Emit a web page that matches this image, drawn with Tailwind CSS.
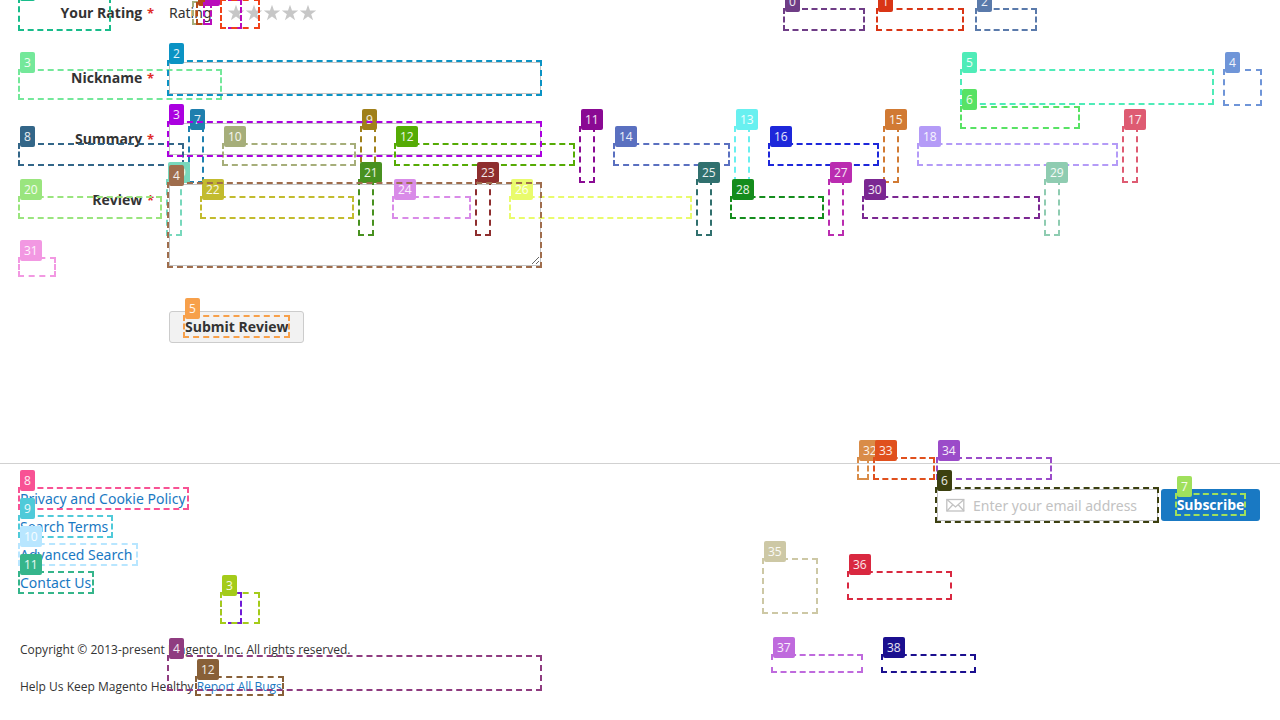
<!DOCTYPE html>
<html lang="en">
<head>
<meta charset="utf-8">
<meta name="viewport" content="width=device-width, initial-scale=1">
<title>Product Review</title>
<script src="https://cdn.jsdelivr.net/npm/@tailwindcss/browser@4"></script>
</head>
<body class="relative min-h-screen overflow-x-hidden bg-white font-['Open_Sans','Noto_Sans',sans-serif] text-sm leading-5 text-[#333]">
<main class="px-5 pb-30">
  <form class="grid max-w-[521px] grid-cols-[134px_1fr] gap-x-[15px]">
    <div class="pt-[3px] text-right font-bold">Your Rating <span class="ml-px text-[13px] text-[#e02b27]">*</span></div>
    <fieldset class="flex h-[62px] items-start pt-[3px]">
      <span class="w-[58px] font-['Noto_Sans','Open_Sans',sans-serif]">Rating</span>
      <label class="w-[18px] pt-px"><input type="radio" name="rating" aria-label="1 star" class="sr-only"><svg class="size-[18px] fill-[#c7c7c7]" viewBox="0 0 18 18"><path d="M9 .7 11 6.600h6.200l-5 3.700 1.900 6L9 12.600l-5.100 3.700 1.900-6-5-3.700H7z"/></svg></label>
      <label class="w-[18px] pt-px"><input type="radio" name="rating" aria-label="2 stars" class="sr-only"><svg class="size-[18px] fill-[#c7c7c7]" viewBox="0 0 18 18"><path d="M9 .7 11 6.600h6.200l-5 3.700 1.900 6L9 12.600l-5.100 3.700 1.900-6-5-3.700H7z"/></svg></label>
      <label class="w-[18px] pt-px"><input type="radio" name="rating" aria-label="3 stars" class="sr-only"><svg class="size-[18px] fill-[#c7c7c7]" viewBox="0 0 18 18"><path d="M9 .7 11 6.600h6.200l-5 3.700 1.900 6L9 12.600l-5.100 3.700 1.900-6-5-3.700H7z"/></svg></label>
      <label class="w-[18px] pt-px"><input type="radio" name="rating" aria-label="4 stars" class="sr-only"><svg class="size-[18px] fill-[#c7c7c7]" viewBox="0 0 18 18"><path d="M9 .7 11 6.600h6.200l-5 3.700 1.900 6L9 12.600l-5.100 3.700 1.900-6-5-3.700H7z"/></svg></label>
      <label class="w-[18px] pt-px"><input type="radio" name="rating" aria-label="5 stars" class="sr-only"><svg class="size-[18px] fill-[#c7c7c7]" viewBox="0 0 18 18"><path d="M9 .7 11 6.600h6.200l-5 3.700 1.900 6L9 12.600l-5.100 3.700 1.900-6-5-3.700H7z"/></svg></label>
    </fieldset>
    <label for="nickname" class="pt-1.5 text-right font-bold">Nickname <span class="ml-px text-[13px] text-[#e02b27]">*</span></label>
    <input id="nickname" type="text" class="mb-[29px] h-8 w-full border border-[#c2c2c2] px-2">
    <label for="summary" class="pt-1.5 text-right font-bold">Summary <span class="ml-px text-[13px] text-[#e02b27]">*</span></label>
    <input id="summary" type="text" class="mb-[29px] h-8 w-full border border-[#c2c2c2] px-2">
    <label for="review" class="pt-1.5 text-right font-bold">Review <span class="ml-px text-[13px] text-[#e02b27]">*</span></label>
    <textarea id="review" class="mb-[45px] block h-[82px] w-full resize border border-[#c2c2c2] p-2"></textarea>
    <button type="button" class="col-start-2 h-8 justify-self-start rounded-[3px] border border-[#ccc] bg-[#f2f2f2] pr-3.5 pl-[15px] font-bold">Submit Review</button>
  </form>
</main>
<footer class="border-t border-[#d1d1d1] px-5 pt-[25px]">
  <div class="flex items-start justify-between font-['Noto_Sans','Open_Sans',sans-serif]">
    <ul class="flex flex-col gap-2 text-[#1979c3]">
      <li><a href="#">Privacy and Cookie Policy</a></li>
      <li><a href="#">Search Terms</a></li>
      <li><a href="#">Advanced Search</a></li>
      <li><a href="#">Contact Us</a></li>
    </ul>
    <form class="flex gap-[3px]">
      <label class="flex h-8 w-[221px] items-center gap-2 border border-[#c2c2c2] pl-2">
        <svg class="h-3.5 w-[19px] shrink-0 fill-none stroke-[#c2c2c2]" viewBox="0 0 19 14"><rect x=".8" y="1.500" width="17" height="11.500" stroke-width="1.300"/><path d="m1 1.500 8.500 7.500L18 1.500M1 13 7 6.500m5 0 6 6.500" stroke-width="1.300"/></svg>
        <input type="email" aria-label="Email address" placeholder="Enter your email address" class="w-full min-w-0 pt-0.5 outline-none placeholder:text-[#c2c2c2]">
      </label>
      <button type="button" class="h-8 w-[99px] rounded-[3px] bg-[#1979c3] font-['Open_Sans','Noto_Sans',sans-serif] font-bold text-white">Subscribe</button>
    </form>
  </div>
  <p class="pt-[47px] text-xs leading-5">Copyright © 2013-present Magento, Inc. All rights reserved.</p>
  <p class="pt-[17px] text-xs leading-5">Help Us Keep Magento Healthy <a href="#" class="text-[#1979c3]">Report All Bugs</a></p>
</footer>
<div id="markers" class="pointer-events-none absolute inset-0 overflow-hidden"></div>
<script>
  // Element markers: left, top, width, height, colour, number
  const markers = [
    [18,-3,93,34,"#18bc8a","2"],
    [192,1,20,24,"#a6ae7a",""],
    [196,2,16,23,"#b44a16","1"],
    [203,2,9,23,"#b90cbb","1"],
    [220,-1,22,30,"#b90cbb",""],
    [220,-1,40,30,"#f04018",""],
    [783,8,82,23,"#6f3d86","0"],
    [876,8,88,23,"#d93515","1"],
    [975,8,62,23,"#5a7aab","2"],
    [18,69,204,31,"#74e89a","3"],
    [1223,69,39,37,"#6f95d8","4"],
    [960,69,254,36,"#4fecb8","5"],
    [960,106,120,23,"#58e264","6"],
    [188,126,16,57,"#1f7fae","7"],
    [18,143,166,23,"#336688","8"],
    [360,126,16,57,"#a0801a","9"],
    [222,143,134,23,"#a6ae7a","10"],
    [579,126,16,57,"#8a0a93","11"],
    [394,143,181,23,"#55ab05","12"],
    [734,126,16,57,"#68f0f0","13"],
    [613,143,117,23,"#5a70c0","14"],
    [883,126,16,57,"#d17a33","15"],
    [768,143,111,23,"#1d27da","16"],
    [1122,126,16,57,"#de5b72","17"],
    [917,143,201,23,"#b49bf7","18"],
    [166,179,16,57,"#78d8bc","19"],
    [18,196,144,23,"#9ae57e","20"],
    [358,179,16,57,"#489120","21"],
    [200,196,154,23,"#c2bb2e","22"],
    [475,179,16,57,"#8e2e2e","23"],
    [392,196,79,23,"#d98be8","24"],
    [696,179,16,57,"#30706e","25"],
    [509,196,183,23,"#e9fb6c","26"],
    [828,179,16,57,"#ba2cb0","27"],
    [730,196,94,23,"#148c1c","28"],
    [1044,179,16,57,"#8fccb1","29"],
    [862,196,178,23,"#7b2792","30"],
    [18,257,38,20,"#f298e2","31"],
    [857,457,12,23,"#d98c48","32"],
    [873,457,62,23,"#e0501d","33"],
    [936,457,116,23,"#9b4bc9","34"],
    [762,558,56,56,"#cdc8a5","35"],
    [847,571,105,29,"#d92840","36"],
    [771,654,92,19,"#bf6add","37"],
    [881,654,95,19,"#1b0f8f","38"],
    [167,60,375,36,"#0b93c4","2"],
    [167,121,375,36,"#ab00e0","3"],
    [167,182,375,86,"#9f6d4c","4"],
    [183,315,107,23,"#f7a04a","5"],
    [935,487,224,36,"#3c4010","6"],
    [1175,493,71,23,"#a0e05c","7"],
    [18,487,171,23,"#f85294","8"],
    [18,515,95,23,"#4fcad9","9"],
    [18,543,120,23,"#b8e6ff","10"],
    [18,571,76,23,"#35b58b","11"],
    [195,676,89,20,"#886038","12"],
    [220,592,22,32,"#701bd8",""],
    [220,592,40,32,"#a4cb1a","3"],
    [167,655,375,36,"#8f3c80","4"]
  ];
  const layer = document.getElementById("markers");
  for (const [x, y, w, h, color, number] of markers) {
    const box = document.createElement("div");
    box.className = "absolute border-2 border-dashed";
    box.style.cssText = `left:${x}px;top:${y}px;width:${w}px;height:${h}px;border-color:${color}`;
    if (number) {
      const badge = document.createElement("span");
      badge.className = "absolute left-0 -top-[19px] h-[21px] rounded-[2px] px-1 text-xs leading-[21px] text-white/90";
      badge.style.backgroundColor = color;
      badge.textContent = number;
      box.append(badge);
    }
    layer.append(box);
  }
</script>
</body>
</html>
